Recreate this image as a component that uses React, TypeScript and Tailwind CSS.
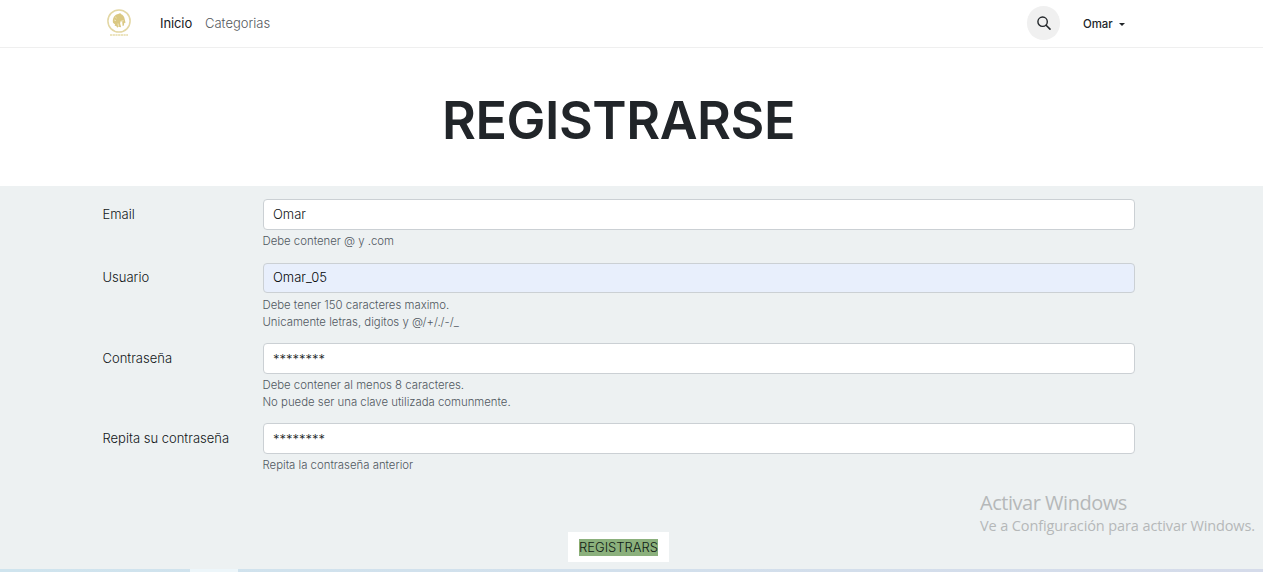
import React from "react";

type Field = {
  label: string;
  value: string;
  hints: string[];
  height: string;
  filled?: boolean;
  secret?: boolean;
};

const fields: Field[] = [
  { label: "Email", value: "Omar", hints: ["Debe contener @ y .com"], height: "h-16" },
  {
    label: "Usuario",
    value: "Omar_05",
    hints: ["Debe tener 150 caracteres maximo.", "Unicamente letras, digitos y @/+/./-/_"],
    height: "h-20",
    filled: true,
  },
  {
    label: "Contraseña",
    value: "********",
    hints: ["Debe contener al menos 8 caracteres.", "No puede ser una clave utilizada comunmente."],
    height: "h-20",
    secret: true,
  },
  { label: "Repita su contraseña", value: "********", hints: ["Repita la contraseña anterior"], height: "h-[109px]", secret: true },
];

function Logo() {
  return (
    <svg width="26" height="30" viewBox="0 0 26 30" fill="none">
      <circle cx="13" cy="13" r="11.1" stroke="#e3d7a4" strokeWidth="1.5" />
      <path
        d="M7 14.8C6.2 10.3 8.4 6.6 12.8 5.8l1.6-.9.3 1.2c2.4.9 3.7 2.7 4 5.2l.8 3.4-1.3.3-.3 2.6-1.3.4-.4-4.4-1.7-.2-.4 2 1.1 3.8-3-.4-.9 1-1.1-1.7-1.6-.3.5-1.2z"
        fill="#dac882"
      />
      <path d="M9.3 9l1.2 1M8.3 12l1.6.6M12 15.5l.5 3M14.6 13.3l3-.6" stroke="#f6f0d8" strokeWidth=".8" />
      <path d="M4 27h18" stroke="#e6dba9" strokeWidth="1.3" strokeDasharray="2.2 .5" />
    </svg>
  );
}

function Header() {
  return (
    <header className="flex h-12 shrink-0 border-b border-[#efefef] bg-white pl-[106px]">
      <div className="w-[54px] pt-2">
        <Logo />
      </div>
      <nav className="flex gap-[13px] pt-[13px] text-[13px] leading-5">
        <a className="w-8 tracking-[-0.1px] whitespace-nowrap text-[#16191d]">Inicio</a>
        <a className="font-light whitespace-nowrap text-[#55595d]">Categorias</a>
      </nav>
      <div className="mr-[138px] ml-auto flex pt-1.5">
        <button className="flex h-[34px] w-[33px] items-center justify-center rounded-full bg-[#f0f0f0]">
          <svg width="14" height="14" viewBox="0 0 14 14" fill="none" stroke="#22262a" strokeWidth="1.4">
            <circle cx="5.6" cy="5.7" r="4.7" />
            <path d="m9.1 9.2 3.9 3.9" strokeWidth="1.6" strokeLinecap="round" />
          </svg>
        </button>
        <button className="ml-[23px] flex h-9 items-center text-[11.4px] font-medium text-[#212529]">
          <span className="w-[36px] pt-0.5 text-left">Omar</span>
          <svg width="6" height="3" viewBox="0 0 6 3" fill="#212529">
            <path d="M0 0h6L3 3z" />
          </svg>
        </button>
      </div>
    </header>
  );
}

function FormRow({ label, value, hints, height, filled, secret }: Field) {
  return (
    <div className={`flex ${height}`}>
      <label className={`w-40 shrink-0 pl-[0.5px] text-[13px] leading-5 font-light whitespace-nowrap text-[#111518] ${filled ? "pt-1" : "pt-[5px]"}`}>
        {label}
      </label>
      <div className="box-content w-[872px] pl-px">
        <div
          className={`flex items-center rounded-[4px] border border-[#cbd0d4] px-[9px] text-[13px] leading-5 font-light ${
            filled ? "h-[30px] bg-[#e8effc] pb-0.5 text-[#050709]" : "h-[31px] bg-white text-[#111518]"
          } ${secret || filled ? "" : "pb-px"}`}
        >
          {value}
        </div>
        <div className={`${filled ? "pt-1" : "pt-[3px]"} -ml-[0.5px] text-[11.375px] leading-[16.5px] font-light text-[#50585f]`}>
          {hints.map((hint) => (
            <p key={hint}>{hint}</p>
          ))}
        </div>
      </div>
    </div>
  );
}

export default function App() {
  return (
    <div className="relative flex h-[572px] w-[1263px] flex-col overflow-hidden bg-[#edf1f2] font-['Inter',sans-serif]">
      <Header />
      <section className="flex h-[138px] shrink-0 justify-center bg-white pt-[43px] pr-[26px]">
        <h1 className="text-[52px] leading-[60px] font-semibold tracking-[-0.45px] text-[#212529]">REGISTRARSE</h1>
      </section>
      <form className="flex flex-col pt-[13px] pl-[102px]">
        {fields.map((field) => (
          <FormRow key={field.label} {...field} />
        ))}
        <button type="button" className="ml-[466px] flex h-[30px] w-[101px] items-center bg-white pl-[11px] text-[13px] font-light text-[#101b14]">
          <span className="h-[17px] w-[79px] bg-[#8bb07c] text-left leading-[17px]">REGISTRARS</span>
        </button>
      </form>
      <div className="mt-auto flex h-[3px] shrink-0 bg-[linear-gradient(to_right,#cfe4ee,#d5dbea)]">
        <div className="ml-[190px] w-12 bg-[#edf6fa]" />
      </div>
      <aside className="absolute top-[490px] left-[980px] font-['Open_Sans',sans-serif] whitespace-nowrap text-[#b5b8b9]">
        <p className="text-[20px] leading-[26px] tracking-[-0.47px]">Activar Windows</p>
        <p className="text-[14.5px] leading-5 tracking-[-0.11px]">Ve a Configuración para activar Windows.</p>
      </aside>
    </div>
  );
}
